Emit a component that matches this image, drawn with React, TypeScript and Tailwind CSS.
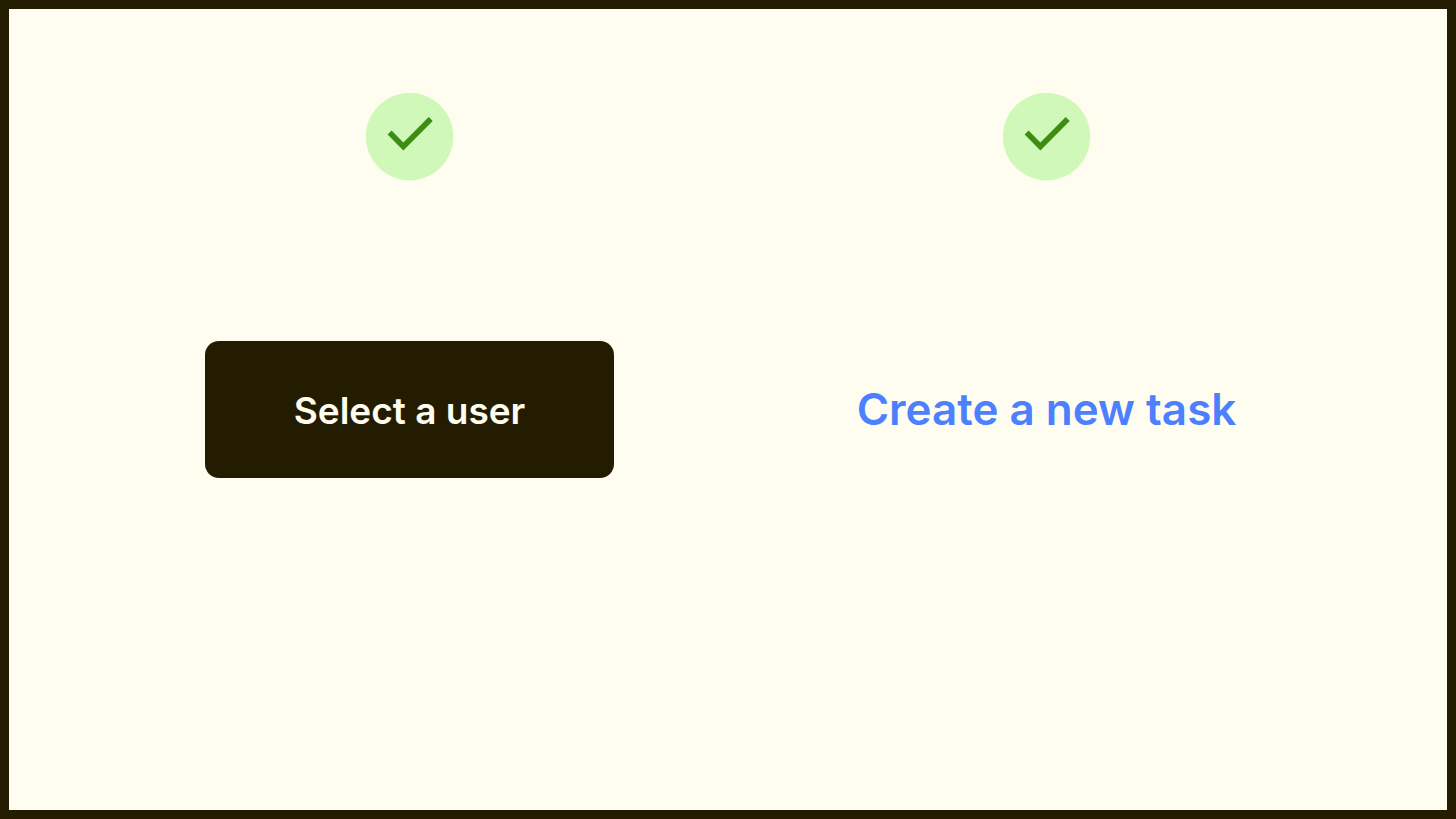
import React from "react";

function CheckBadge() {
  return (
    <svg
      role="img"
      aria-label="Recommended"
      viewBox="0 0 88 88"
      className="size-[88px] shrink-0"
    >
      <circle cx="43.6" cy="43.6" r="43.8" fill="#d0f9b9" />
      <path
        d="M21.6 41.6 L25.6 37.6 L37.4 49.4 L62.7 24.1 L66.7 28.1 L37.4 57.4 Z"
        fill="#3c8d13"
      />
    </svg>
  );
}

function Example({ children }: { children: React.ReactNode }) {
  return (
    <section className="flex flex-col items-center gap-40">
      <CheckBadge />
      {children}
    </section>
  );
}

export default function App() {
  return (
    <main
      className="grid min-h-screen grid-cols-2 border-[9px] border-[#241c01] bg-[#fffdf0] px-[82px] pt-[84px] font-semibold"
      style={{ fontFamily: "Inter, 'Liberation Sans', sans-serif" }}
    >
      <Example>
        <button
          type="button"
          className="h-[137px] w-[409px] rounded-[14px] bg-[#241c01] pt-0.5 text-[37px] text-[#fffdf0]"
        >
          Select a user
        </button>
      </Example>
      <Example>
        <a
          href="#new-task"
          className="flex h-[136px] items-center whitespace-nowrap text-[44px] text-[#4d80ff]"
        >
          Create a new task
        </a>
      </Example>
    </main>
  );
}
